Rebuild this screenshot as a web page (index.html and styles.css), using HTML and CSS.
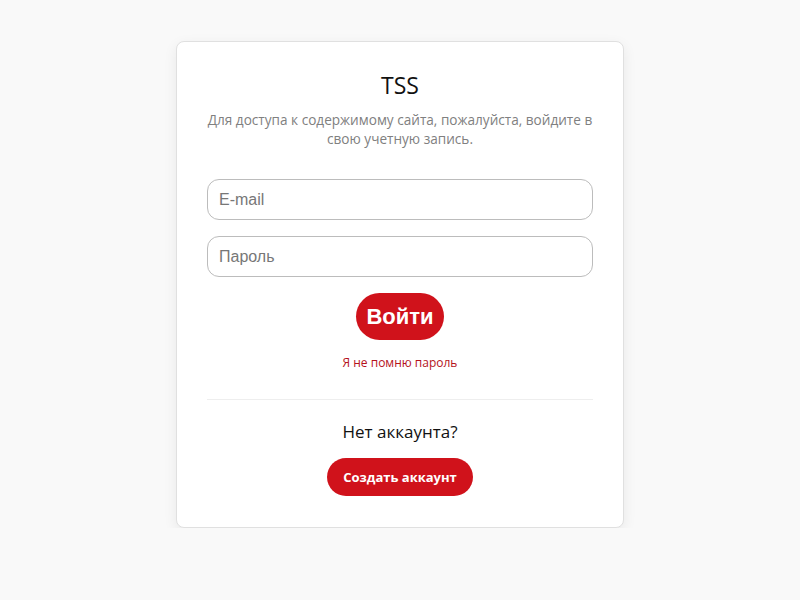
FILE: index.html
```html
<!DOCTYPE html>
<html lang="ru">
<head>
<meta charset="utf-8">
<title>TSS</title>
<link rel="stylesheet" href="styles.css">
</head>
<body>
<main class="page">
  <section class="card">
    <h1 class="title">TSS</h1>
    <p class="subtitle">Для доступа к содержимому сайта, пожалуйста, войдите в свою учетную запись.</p>
    <form class="form">
      <input class="field" type="text" placeholder="E-mail">
      <input class="field" type="password" placeholder="Пароль">
      <button class="btn-login" type="button">Войти</button>
      <a class="forgot" href="#">Я не помню пароль</a>
    </form>
    <hr class="divider">
    <p class="noacc">Нет аккаунта?</p>
    <button class="btn-create" type="button">Создать аккаунт</button>
  </section>
</main>
</body>
</html>
```
FILE: styles.css
```css
html, body {
  margin: 0;
  padding: 0;
  background: #f9f9f9;
  font-family: "Open Sans", "Noto Sans", sans-serif;
}
.page {
  display: flex;
  justify-content: center;
  padding-top: 41px;
}
.card {
  width: 448px;
  box-sizing: border-box;
  background: #fff;
  border: 1px solid #e0e0e0;
  border-radius: 8px;
  box-shadow: 0 4px 14px rgba(0,0,0,0.07);
  padding: 28px 30px 31px;
  display: flex;
  flex-direction: column;
  align-items: center;
}
.title {
  margin: 0;
  font-size: 23px;
  font-weight: 400;
  line-height: 30px;
  color: #111;
}
.subtitle {
  margin: 10px -5px 0;
  font-size: 13.6px;
  line-height: 19px;
  color: #808080;
  text-align: center;
}
.form {
  margin-top: 31px;
  width: 100%;
  display: flex;
  flex-direction: column;
  align-items: center;
}
.field {
  width: 100%;
  box-sizing: border-box;
  height: 41px;
  border: 1px solid #bcbcbc;
  border-radius: 12px;
  padding: 0 11px;
  font-family: "Liberation Sans", Arial, sans-serif;
  font-size: 16px;
  color: #333;
  margin-bottom: 16px;
  outline: none;
}
.field::placeholder {
  color: #777;
}
.btn-login {
  background: #d0121b;
  color: #fff;
  border: none;
  border-radius: 24px;
  height: 47px;
  padding: 0 10px;
  font-family: "Liberation Sans", Arial, sans-serif;
  font-weight: 700;
  font-size: 22px;
  cursor: pointer;
}
.forgot {
  margin-top: 14px;
  font-size: 12px;
  line-height: 18px;
  color: #b5121b;
  text-decoration: none;
}
.divider {
  width: 100%;
  margin: 27px 0 0;
  border: none;
  border-top: 1px solid #eeeeee;
}
.noacc {
  margin: 20px 0 0;
  font-size: 17px;
  line-height: 24px;
  color: #111;
}
.btn-create {
  margin-top: 14px;
  background: #d0121b;
  color: #fff;
  border: none;
  border-radius: 19px;
  height: 38px;
  padding: 0 16px;
  font-family: "Open Sans", "Noto Sans", sans-serif;
  font-weight: 700;
  font-size: 13px;
  cursor: pointer;
}
```
